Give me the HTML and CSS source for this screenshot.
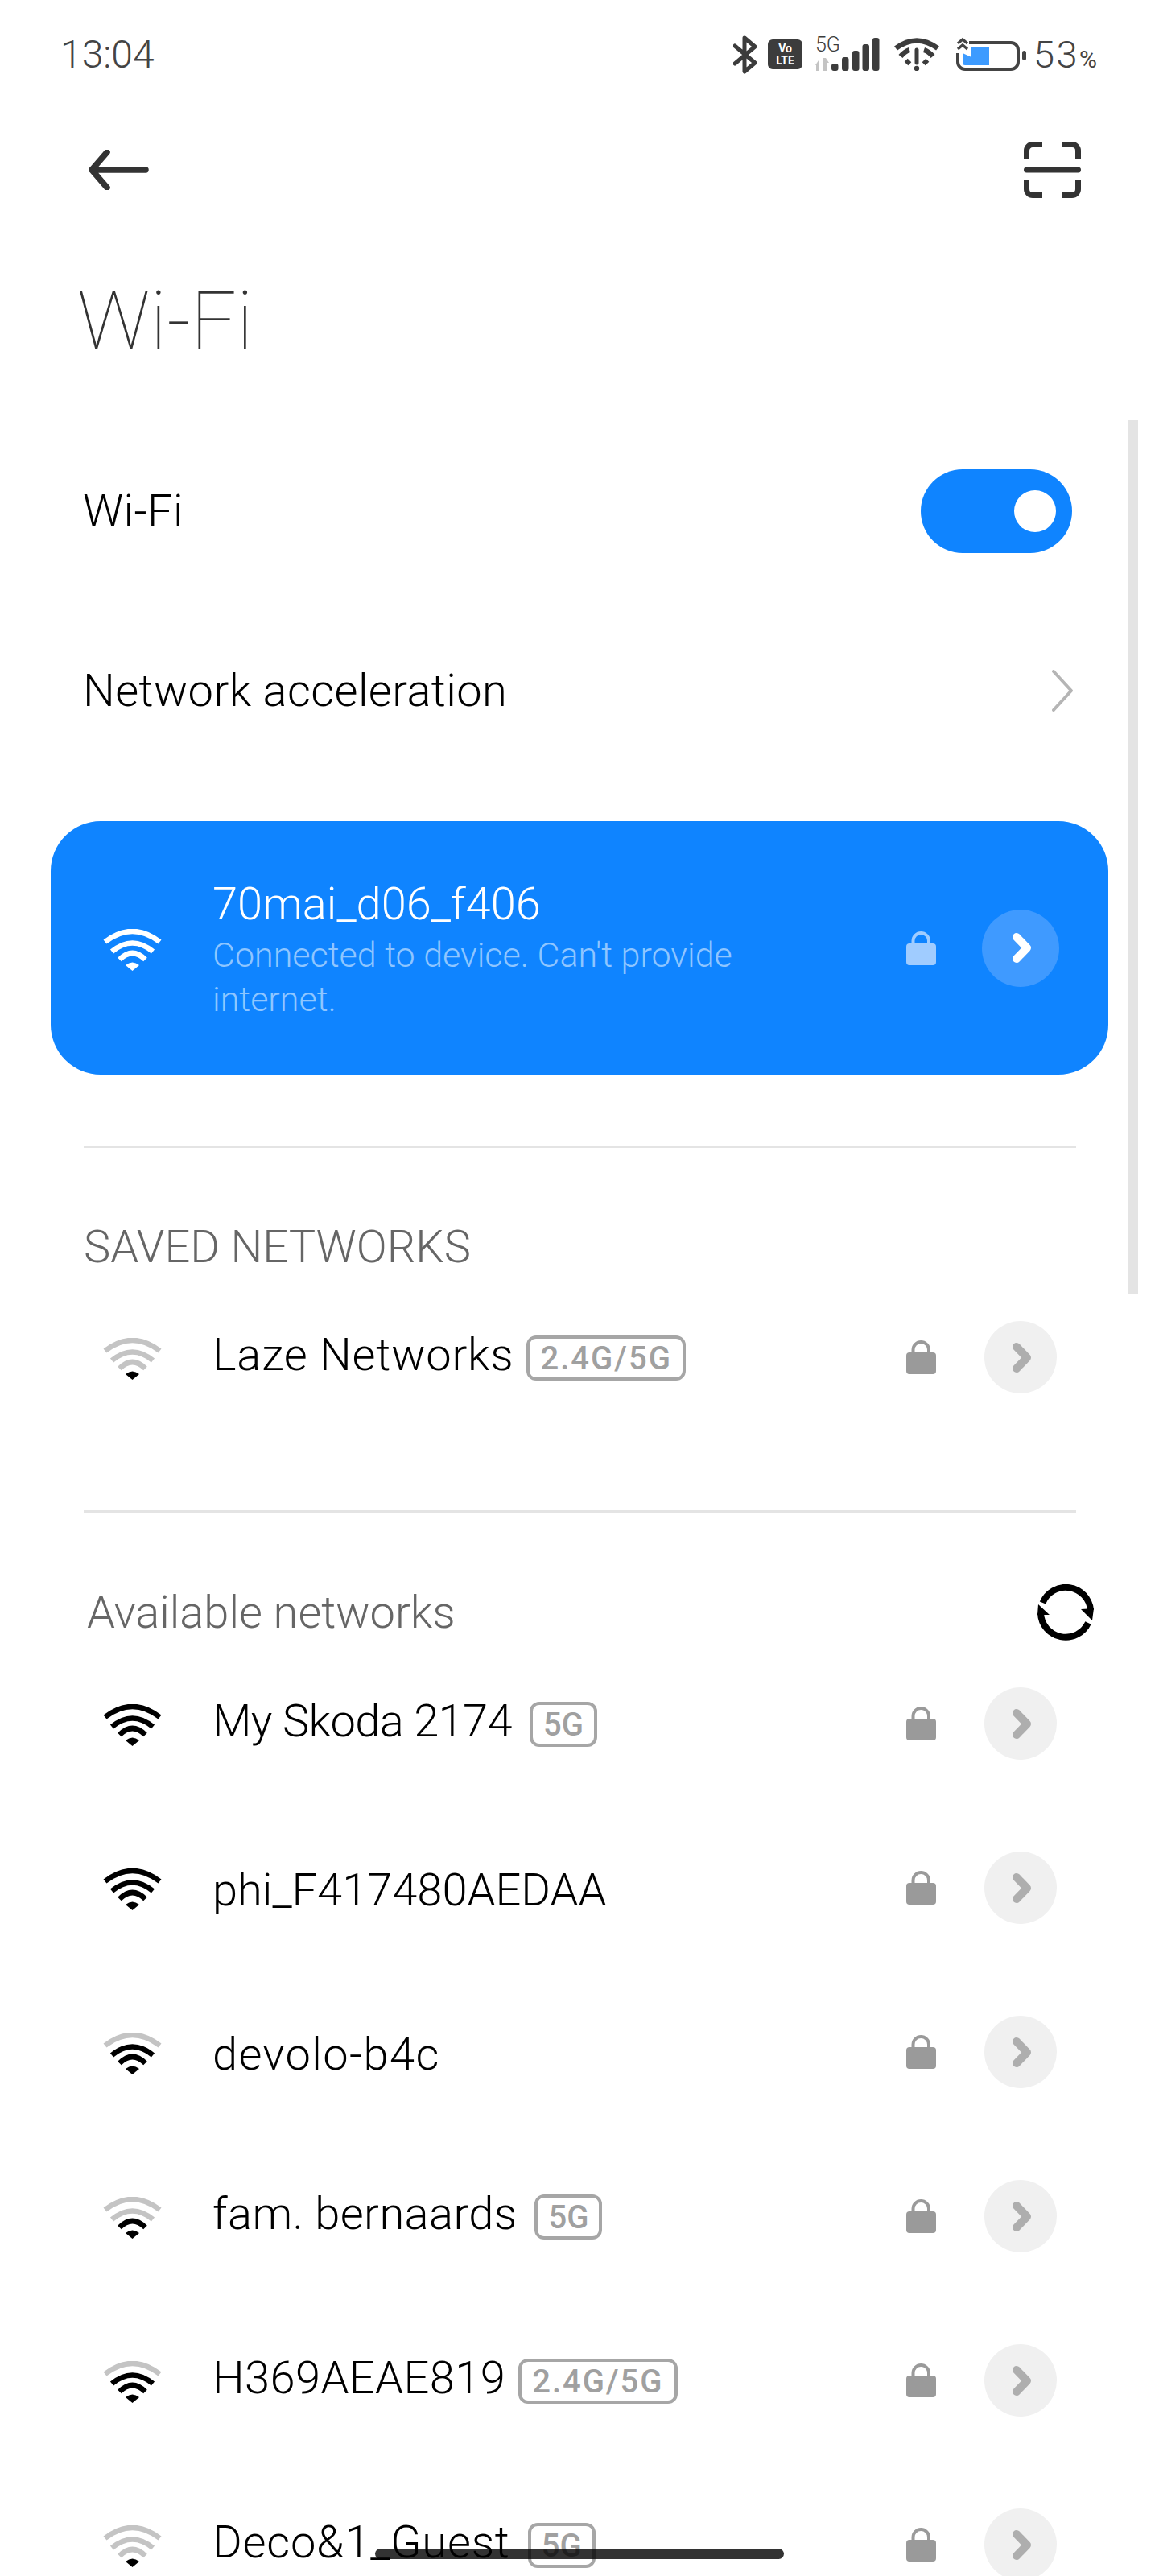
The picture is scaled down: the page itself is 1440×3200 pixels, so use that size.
FILE: index.html
```html
<!DOCTYPE html>
<html lang="en">
<head>
  <meta charset="UTF-8">
  <title>Wi-Fi</title>
  <link rel="stylesheet" href="styles.css">
</head>
<body>

  <svg class="icon-defs" width="0" height="0">
    <symbol id="wifi" viewBox="0 0 73 52">
      <path class="arc arc-a" d="M2.5 16Q36.5 -10 70.5 16"/>
      <path class="arc arc-b" d="M11 28Q36.5 7 62 28"/>
      <path class="arc arc-c" d="M20.5 38Q36.5 22 52.5 38"/>
      <path class="arc-dot" d="M28 45Q36.5 38 45 45L36.5 52Z"/>
    </symbol>
    <symbol id="lock" viewBox="0 0 37 42">
      <path d="M8.5 17V11.75a9.75 9.75 0 0 1 19.5 0V17" fill="none" stroke="currentColor" stroke-width="4"/>
      <rect y="15" width="37" height="27" rx="4" fill="currentColor"/>
    </symbol>
    <symbol id="chevron" viewBox="0 0 23 37">
      <path d="M5 5L18 18.5L5 32" fill="none" stroke="currentColor" stroke-width="10" stroke-linecap="round" stroke-linejoin="round"/>
    </symbol>
  </svg>

  <div class="status-bar">
    <span class="clock">13:04</span>
    <div class="status-icons">
      <svg class="st-bt" width="29" height="48" viewBox="0 0 29 48">
        <path d="M2 13L27 34L14 45V3L27 14L2 35" fill="none" stroke="#3c3c3c" stroke-width="5" stroke-linejoin="round" stroke-linecap="round"/>
      </svg>
      <svg class="st-volte" width="43" height="37" viewBox="0 0 43 37">
        <rect width="43" height="37" rx="6" fill="#3c3c3c"/>
        <text x="21.5" y="16" class="volte-text">Vo</text>
        <text x="21.5" y="31" class="volte-text">LTE</text>
      </svg>
      <svg class="st-signal" width="84" height="50" viewBox="0 -6 84 50">
        <text x="4" y="19" class="signal-text">5G</text>
        <path d="M4 36L8 30V43H5V36ZM14 27H17L21 33H18V43H14Z" fill="#c4c4c4"/>
        <rect x="24" y="34" width="8.5" height="9" rx="3" fill="#3c3c3c"/>
        <rect x="37" y="26" width="8.5" height="17" rx="3" fill="#3c3c3c"/>
        <rect x="50" y="18" width="8.5" height="25" rx="3" fill="#3c3c3c"/>
        <rect x="62.5" y="10" width="8.5" height="33" rx="3" fill="#3c3c3c"/>
        <rect x="75" y="2" width="8.5" height="41" rx="3" fill="#3c3c3c"/>
      </svg>
      <svg class="st-wifi" width="58" height="41" viewBox="0 0 58 41">
        <path d="M3 13Q29 -6 55 13M9 23Q14 17 20 15M49 23Q44 17 38 15M16 32L20 28M42 32L38 28" fill="none" stroke="#3c3c3c" stroke-width="6.5"/>
        <path d="M29 15V31" stroke="#3c3c3c" stroke-width="5" stroke-linecap="round"/>
        <circle cx="29" cy="38" r="3.2" fill="#3c3c3c"/>
      </svg>
      <svg class="st-battery" width="88" height="43" viewBox="0 0 88 43">
        <path d="M16 7H68a9 9 0 0 1 9 9V31a9 9 0 0 1 -9 9H11a9 9 0 0 1 -9 -9V20" fill="none" stroke="#444" stroke-width="4"/>
        <path d="M19 12H41V35H11Q8 35 8 32V20L19 25Z" fill="#3d9bff"/>
        <path d="M2 8L8 3L14 8M2 15L8 10L14 15" fill="none" stroke="#444" stroke-width="3.5"/>
        <rect x="82" y="17" width="5" height="12" rx="2.5" fill="#444"/>
      </svg>
      <span class="battery-pct">53<small>%</small></span>
    </div>
  </div>

  <div class="toolbar">
    <svg width="76" height="50" viewBox="0 0 76 50">
      <path d="M72 25H5M24 3L5 25L24 47" fill="none" stroke="#333" stroke-width="7.5" stroke-linecap="round" stroke-linejoin="round"/>
    </svg>
    <svg width="71" height="70" viewBox="0 0 71 70">
      <path d="M23 3.500H11a7.500 7.500 0 0 0 -7.500 7.500V22M48 3.500H60a7.500 7.500 0 0 1 7.500 7.500V22M23 66.500H11a7.500 7.500 0 0 1 -7.500 -7.500V48M48 66.500H60a7.500 7.500 0 0 0 7.500 -7.500V48" fill="none" stroke="#333" stroke-width="7"/>
      <path d="M3.500 35H67.500" stroke="#333" stroke-width="7" stroke-linecap="round"/>
    </svg>
  </div>

  <h1 class="page-title">Wi-Fi</h1>

  <div class="setting-row">
    <span>Wi-Fi</span>
    <div class="toggle"><div class="toggle-knob"></div></div>
  </div>
  <div class="setting-row">
    <span>Network acceleration</span>
    <svg class="setting-arrow" width="26" height="52" viewBox="0 0 26 52">
      <path d="M2 2L24 26L2 50" fill="none" stroke="#b5b5b5" stroke-width="4" stroke-linecap="round" stroke-linejoin="round"/>
    </svg>
  </div>

  <div class="connected-card">
    <svg class="wifi wifi-white"><use href="#wifi"/></svg>
    <div class="connected-text">
      <div class="connected-name">70mai_d06_f406</div>
      <div class="connected-sub">Connected to device. Can't provide internet.</div>
    </div>
    <svg class="lock lock-light"><use href="#lock"/></svg>
    <div class="round-btn round-btn-light"><svg class="chevron"><use href="#chevron"/></svg></div>
  </div>

  <div class="divider divider-first"></div>

  <div class="section-head"><span class="saved-title">SAVED NETWORKS</span></div>
  <div class="net-row">
    <svg class="wifi level-1"><use href="#wifi"/></svg>
    <div class="net-name has-tag">
      <span class="name-wide">Laze Networks</span><span class="band-tag band-tag-dual">2.4G/5G</span>
    </div>
    <svg class="lock"><use href="#lock"/></svg>
    <div class="round-btn"><svg class="chevron"><use href="#chevron"/></svg></div>
  </div>

  <div class="divider"></div>

  <div class="section-head avail-head">
    <span class="avail-title">Available networks</span>
    <svg class="refresh" width="70" height="70" viewBox="0 0 70 70">
      <path d="M6.500 23A31 31 0 0 1 66 32M63 48A31 31 0 0 1 4 36" fill="none" stroke="#000" stroke-width="8"/>
      <path d="M54 31L70 30L68 45ZM1 25L15 38H0Z" fill="#000"/>
    </svg>
  </div>

  <div class="net-row">
    <svg class="wifi level-4"><use href="#wifi"/></svg>
    <div class="net-name has-tag">
      <span class="name-tight">My Skoda 2174</span><span class="band-tag">5G</span>
    </div>
    <svg class="lock"><use href="#lock"/></svg>
    <div class="round-btn"><svg class="chevron"><use href="#chevron"/></svg></div>
  </div>
  <div class="net-row">
    <svg class="wifi level-4"><use href="#wifi"/></svg>
    <div class="net-name"><span>phi_F417480AEDAA</span></div>
    <svg class="lock"><use href="#lock"/></svg>
    <div class="round-btn"><svg class="chevron"><use href="#chevron"/></svg></div>
  </div>
  <div class="net-row">
    <svg class="wifi level-3"><use href="#wifi"/></svg>
    <div class="net-name"><span class="name-wider">devolo-b4c</span></div>
    <svg class="lock"><use href="#lock"/></svg>
    <div class="round-btn"><svg class="chevron"><use href="#chevron"/></svg></div>
  </div>
  <div class="net-row">
    <svg class="wifi level-2"><use href="#wifi"/></svg>
    <div class="net-name has-tag">
      <span class="name-loose">fam. bernaards</span><span class="band-tag">5G</span>
    </div>
    <svg class="lock"><use href="#lock"/></svg>
    <div class="round-btn"><svg class="chevron"><use href="#chevron"/></svg></div>
  </div>
  <div class="net-row">
    <svg class="wifi level-3"><use href="#wifi"/></svg>
    <div class="net-name has-tag">
      <span class="name-loose">H369AEAE819</span><span class="band-tag band-tag-dual">2.4G/5G</span>
    </div>
    <svg class="lock"><use href="#lock"/></svg>
    <div class="round-btn"><svg class="chevron"><use href="#chevron"/></svg></div>
  </div>
  <div class="net-row">
    <svg class="wifi level-1"><use href="#wifi"/></svg>
    <div class="net-name has-tag">
      <span class="name-wide">Deco&amp;1_Guest</span><span class="band-tag">5G</span>
    </div>
    <svg class="lock"><use href="#lock"/></svg>
    <div class="round-btn"><svg class="chevron"><use href="#chevron"/></svg></div>
  </div>

  <div class="scrollbar"></div>
  <div class="home-bar"></div>

</body>
</html>
```

FILE: styles.css
```css
body {
  margin: 0;
  width: 1440px;
  height: 3200px;
  overflow: hidden;
  position: relative;
  background-color: #fff;
  color: #000;
  font-family: Roboto, "Liberation Sans", sans-serif;
  font-weight: 300;
}

.icon-defs {
  position: absolute;
}

/* status bar */
.status-bar {
  height: 135px;
  display: flex;
  align-items: center;
  justify-content: space-between;
  padding: 0 77px 0 75px;
}

.clock {
  font-size: 48px;
  color: #444;
}

.status-icons {
  display: flex;
  align-items: center;
}

.st-volte {
  margin-left: 14px;
}

.st-signal {
  margin-left: 12px;
  margin-top: -8px;
}

.st-wifi {
  margin-left: 17px;
}

.st-battery {
  margin-left: 20px;
}

.volte-text {
  font-family: Roboto, sans-serif;
  font-size: 14px;
  font-weight: 700;
  fill: #fff;
  text-anchor: middle;
}

.signal-text {
  font-family: Roboto, sans-serif;
  font-size: 25px;
  font-weight: 300;
  fill: #3c3c3c;
}

.battery-pct {
  margin-left: 8px;
  font-size: 47px;
  letter-spacing: 2.5px;
  color: #444;
}

.battery-pct small {
  font-size: 30px;
  font-weight: 400;
  letter-spacing: 0;
}

/* header */
.toolbar {
  height: 151px;
  display: flex;
  align-items: center;
  justify-content: space-between;
  padding: 0 97px 0 109px;
}

.page-title {
  margin: 0 0 15px;
  padding-top: 4px;
  padding-left: 96px;
  font-size: 100px;
  font-weight: 100;
  line-height: 218px;
  color: #333;
}

.setting-row {
  height: 223px;
  display: flex;
  align-items: center;
  justify-content: space-between;
  padding: 0 108px 0 103px;
  font-size: 56px;
  letter-spacing: 0.4px;
}

.setting-arrow {
  margin-right: -1px;
}

.toggle {
  width: 188px;
  height: 104px;
  border-radius: 52px;
  background-color: #0f84ff;
  display: flex;
  align-items: center;
  justify-content: flex-end;
  padding-right: 20px;
  box-sizing: border-box;
}

.toggle-knob {
  width: 52px;
  height: 52px;
  border-radius: 50%;
  background-color: #fff;
}

/* connected network */
.connected-card {
  margin: 51px 63px 0;
  height: 315px;
  border-radius: 62px;
  background-color: #0f84ff;
  color: #fff;
  display: flex;
  align-items: center;
  padding: 0 61px 0 65px;
  box-sizing: border-box;
}

.connected-text {
  flex: 1;
  margin-left: 63px;
  padding-top: 4px;
}

.connected-name {
  font-size: 56px;
  line-height: 64px;
}

.connected-sub {
  width: 680px;
  margin-top: 4px;
  font-size: 43px;
  line-height: 55px;
  color: #8fc6ff;
}

.divider {
  margin: 88px 103px 0 104px;
  height: 3px;
  background-color: #e4e4e4;
}

/* lists */
.section-head {
  display: flex;
  align-items: center;
  justify-content: space-between;
  padding: 86px 0 0 104px;
  height: 72px;
  font-size: 56px;
  color: #666;
}

.saved-title {
  margin-top: 2px;
}

.avail-head {
  padding: 88px 81px 0 108px;
}

.net-row {
  height: 204px;
  display: flex;
  align-items: center;
  padding: 0 127px 0 128px;
  box-sizing: border-box;
}

.net-name {
  flex: 1;
  margin-left: 63px;
  margin-top: 6px;
  font-size: 56px;
  display: flex;
  align-items: center;
}

.net-name.has-tag {
  margin-top: -6px;
}

/* roboto digits and letters run a bit off the original, so names get nudged */
.name-wide { letter-spacing: 0.8px; }
.name-wider { letter-spacing: 1.4px; }
.name-loose { letter-spacing: 0.4px; }
.name-tight { letter-spacing: -0.6px; }

.band-tag {
  margin-left: 22px;
  margin-top: 8px;
  height: 56px;
  padding: 0 13px;
  border: 4px solid #a6a6a6;
  border-radius: 12px;
  box-sizing: border-box;
  display: flex;
  align-items: center;
  font-size: 40px;
  font-weight: 500;
  color: #a0a0a0;
}

.band-tag-dual {
  margin-left: 16px;
  letter-spacing: 2px;
}

/* icons */
.wifi {
  width: 73px;
  height: 52px;
  margin-top: 4px;
  flex-shrink: 0;
  --arc-a: #000;
  --arc-b: #000;
  --arc-c: #000;
  --arc-dot: #000;
}

.arc {
  fill: none;
  stroke-width: 6.5;
}

.arc-a { stroke: var(--arc-a); }
.arc-b { stroke: var(--arc-b); }
.arc-c { stroke: var(--arc-c); }
.arc-dot { fill: var(--arc-dot); }

.level-3 { --arc-a: #c4c4c4; }
.level-2 { --arc-a: #c4c4c4; --arc-b: #c4c4c4; }
.level-1 { --arc-a: #c4c4c4; --arc-b: #c4c4c4; --arc-c: #c4c4c4; }

.wifi-white {
  --arc-a: #fff;
  --arc-b: #fff;
  --arc-c: #fff;
  --arc-dot: #fff;
}

.lock {
  width: 37px;
  height: 42px;
  color: #9a9a9a;
  flex-shrink: 0;
}

.lock-light {
  color: #a0ccff;
}

.round-btn {
  width: 90px;
  height: 90px;
  margin-left: 60px;
  border-radius: 50%;
  background-color: #f0f0f0;
  color: #aeaeae;
  display: flex;
  align-items: center;
  justify-content: center;
  flex-shrink: 0;
}

.round-btn-light {
  width: 96px;
  height: 96px;
  margin-left: 57px;
  background-color: #3f9aff;
  color: #fff;
}

.chevron {
  width: 23px;
  height: 37px;
  margin-left: 3px;
}

/* overlays */
.scrollbar {
  position: absolute;
  left: 1401px;
  top: 522px;
  width: 13px;
  height: 1086px;
  background-color: #e4e4e4;
}

.home-bar {
  position: absolute;
  left: 466px;
  top: 3166px;
  width: 508px;
  height: 13px;
  border-radius: 7px;
  background-color: rgba(0, 0, 0, 0.8);
}
```
